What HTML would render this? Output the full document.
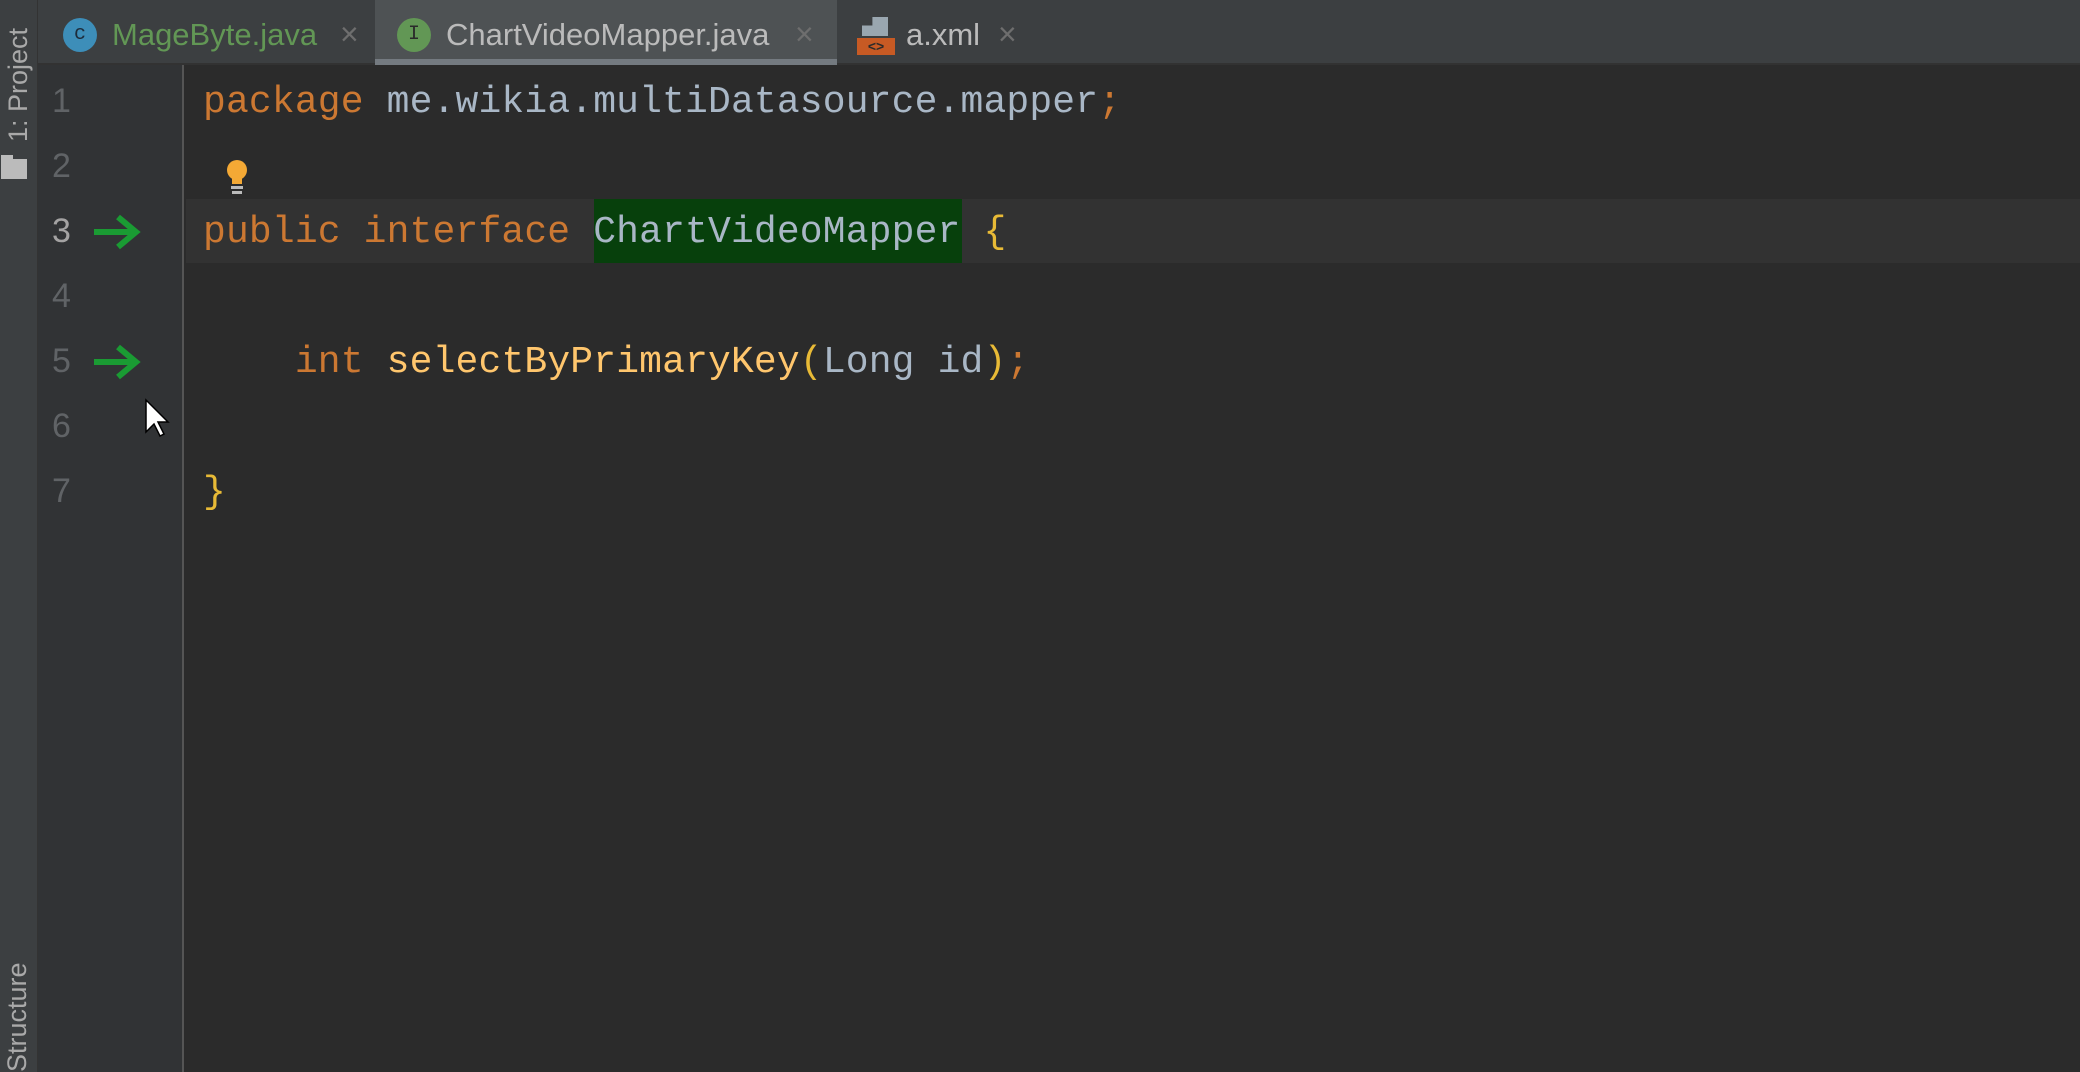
<!DOCTYPE html>
<html><head><meta charset="utf-8"><style>
*{margin:0;padding:0;box-sizing:border-box}
body{width:2080px;height:1072px;background:#2b2b2b;position:relative;overflow:hidden;font-family:"Liberation Sans",sans-serif}
.strip{position:absolute;left:0;top:0;width:38px;height:1072px;background:#3c3f41;border-right:1px solid #333}
.vt{position:absolute;transform:rotate(-90deg);transform-origin:left top;color:#a9a9a9;font-size:27px;white-space:nowrap}
.tabs{position:absolute;left:38px;top:0;width:2042px;height:65px;background:#3c3f41;border-bottom:2px solid #323232}
.tab{position:absolute;top:0;height:65px}
.tt{position:absolute;top:17px;font-size:31px;white-space:nowrap}
.x{position:absolute;top:16px;font-size:32px;color:#6e6e6e}
.ic{position:absolute;top:18px;width:34px;height:34px;border-radius:50%;font-family:"Liberation Mono",monospace;font-size:20px;text-align:center;line-height:34px}
.gutter{position:absolute;left:38px;top:65px;width:146px;height:1007px;background:#313335;border-right:2px solid #555}
.ln{position:absolute;left:52px;width:30px;font-family:"Liberation Sans",sans-serif;font-size:34px;color:#606366}
.code{position:absolute;left:203px;font-family:"Liberation Mono",monospace;font-size:38px;letter-spacing:0.15px;white-space:pre;color:#a9b7c6;line-height:65px;height:65px}
.k{color:#cc7832}.m{color:#ffc66d}.b{color:#e8ba36}
</style></head><body>
<div class="strip">
<div class="vt" style="left:3px;top:142px">1: Project</div>
<div style="position:absolute;left:1px;top:159px;width:26px;height:20px;background:#bbb"></div>
<div style="position:absolute;left:1px;top:155px;width:12px;height:6px;background:#bbb"></div>
<div class="vt" style="left:2px;top:1072px">Structure</div>
</div>
<div class="tabs">
<div class="ic" style="left:25px;background:#3d8eb9;color:#1d2b3a">c</div>
<div class="tt" style="left:74px;color:#629755">MageByte.java</div>
<div class="x" style="left:302px">×</div>
<div class="tab" style="left:337px;width:462px;background:#4e5254"><div style="position:absolute;left:0;bottom:0;width:462px;height:6px;background:#747a80"></div></div>
<div class="ic" style="left:359px;background:#629755;color:#2b2b2b">I</div>
<div class="tt" style="left:408px;color:#bbbbbb">ChartVideoMapper.java</div>
<div class="x" style="left:757px">×</div>
<div style="position:absolute;left:824px;top:17px;width:26px;height:19px;background:#9aa7b0;clip-path:polygon(40% 0,100% 0,100% 100%,0 100%,0 45%,40% 45%)"></div>
<div style="position:absolute;left:819px;top:38px;width:38px;height:17px;background:#c75a24;color:#2b2b2b;font-size:14px;font-weight:bold;text-align:center;line-height:17px">&lt;&gt;</div>
<div class="tt" style="left:868px;color:#bbbbbb">a.xml</div>
<div class="x" style="left:960px">×</div>
</div>
<div class="gutter"></div>
<div style="position:absolute;left:186px;top:199px;width:1894px;height:64px;background:#323232"></div>
<div class="ln" style="top:82px">1</div>
<div class="ln" style="top:147px">2</div>
<div class="ln" style="top:212px;color:#a4a3a3">3</div>
<div class="ln" style="top:277px">4</div>
<div class="ln" style="top:342px">5</div>
<div class="ln" style="top:407px">6</div>
<div class="ln" style="top:472px">7</div>
<svg style="position:absolute;left:90px;top:212px" width="52" height="40"><path d="M4 20H44M28 5L46 20L28 35" stroke="#1a9b33" stroke-width="6" fill="none"/></svg>
<svg style="position:absolute;left:90px;top:342px" width="52" height="40"><path d="M4 20H44M28 5L46 20L28 35" stroke="#1a9b33" stroke-width="6" fill="none"/></svg>
<svg style="position:absolute;left:223px;top:159px" width="30" height="38"><circle cx="14" cy="11" r="10" fill="#f4a935"/><rect x="9" y="15" width="10" height="10" fill="#f4a935"/><rect x="8" y="27" width="12" height="3" fill="#bbb"/><rect x="9" y="32" width="10" height="3" fill="#bbb"/></svg>
<svg style="position:absolute;left:144px;top:398px" width="26" height="40"><path d="M2 2V34L10 26L16 38L20 36L14 24H24Z" fill="#fff" stroke="#000" stroke-width="1.5"/></svg>
<div style="position:absolute;left:594px;top:199px;width:368px;height:64px;background:#07400c"></div>
<div class="code" style="top:70px"><span class="k">package</span> me.wikia.multiDatasource.mapper<span class="k">;</span></div>
<div class="code" style="top:200px"><span class="k">public interface</span> ChartVideoMapper <span class="b">{</span></div>
<div class="code" style="top:330px">    <span class="k">int</span> <span class="m">selectByPrimaryKey</span><span class="b">(</span>Long id<span class="b">)</span><span class="k">;</span></div>
<div class="code" style="top:460px"><span class="b">}</span></div>
</body></html>
